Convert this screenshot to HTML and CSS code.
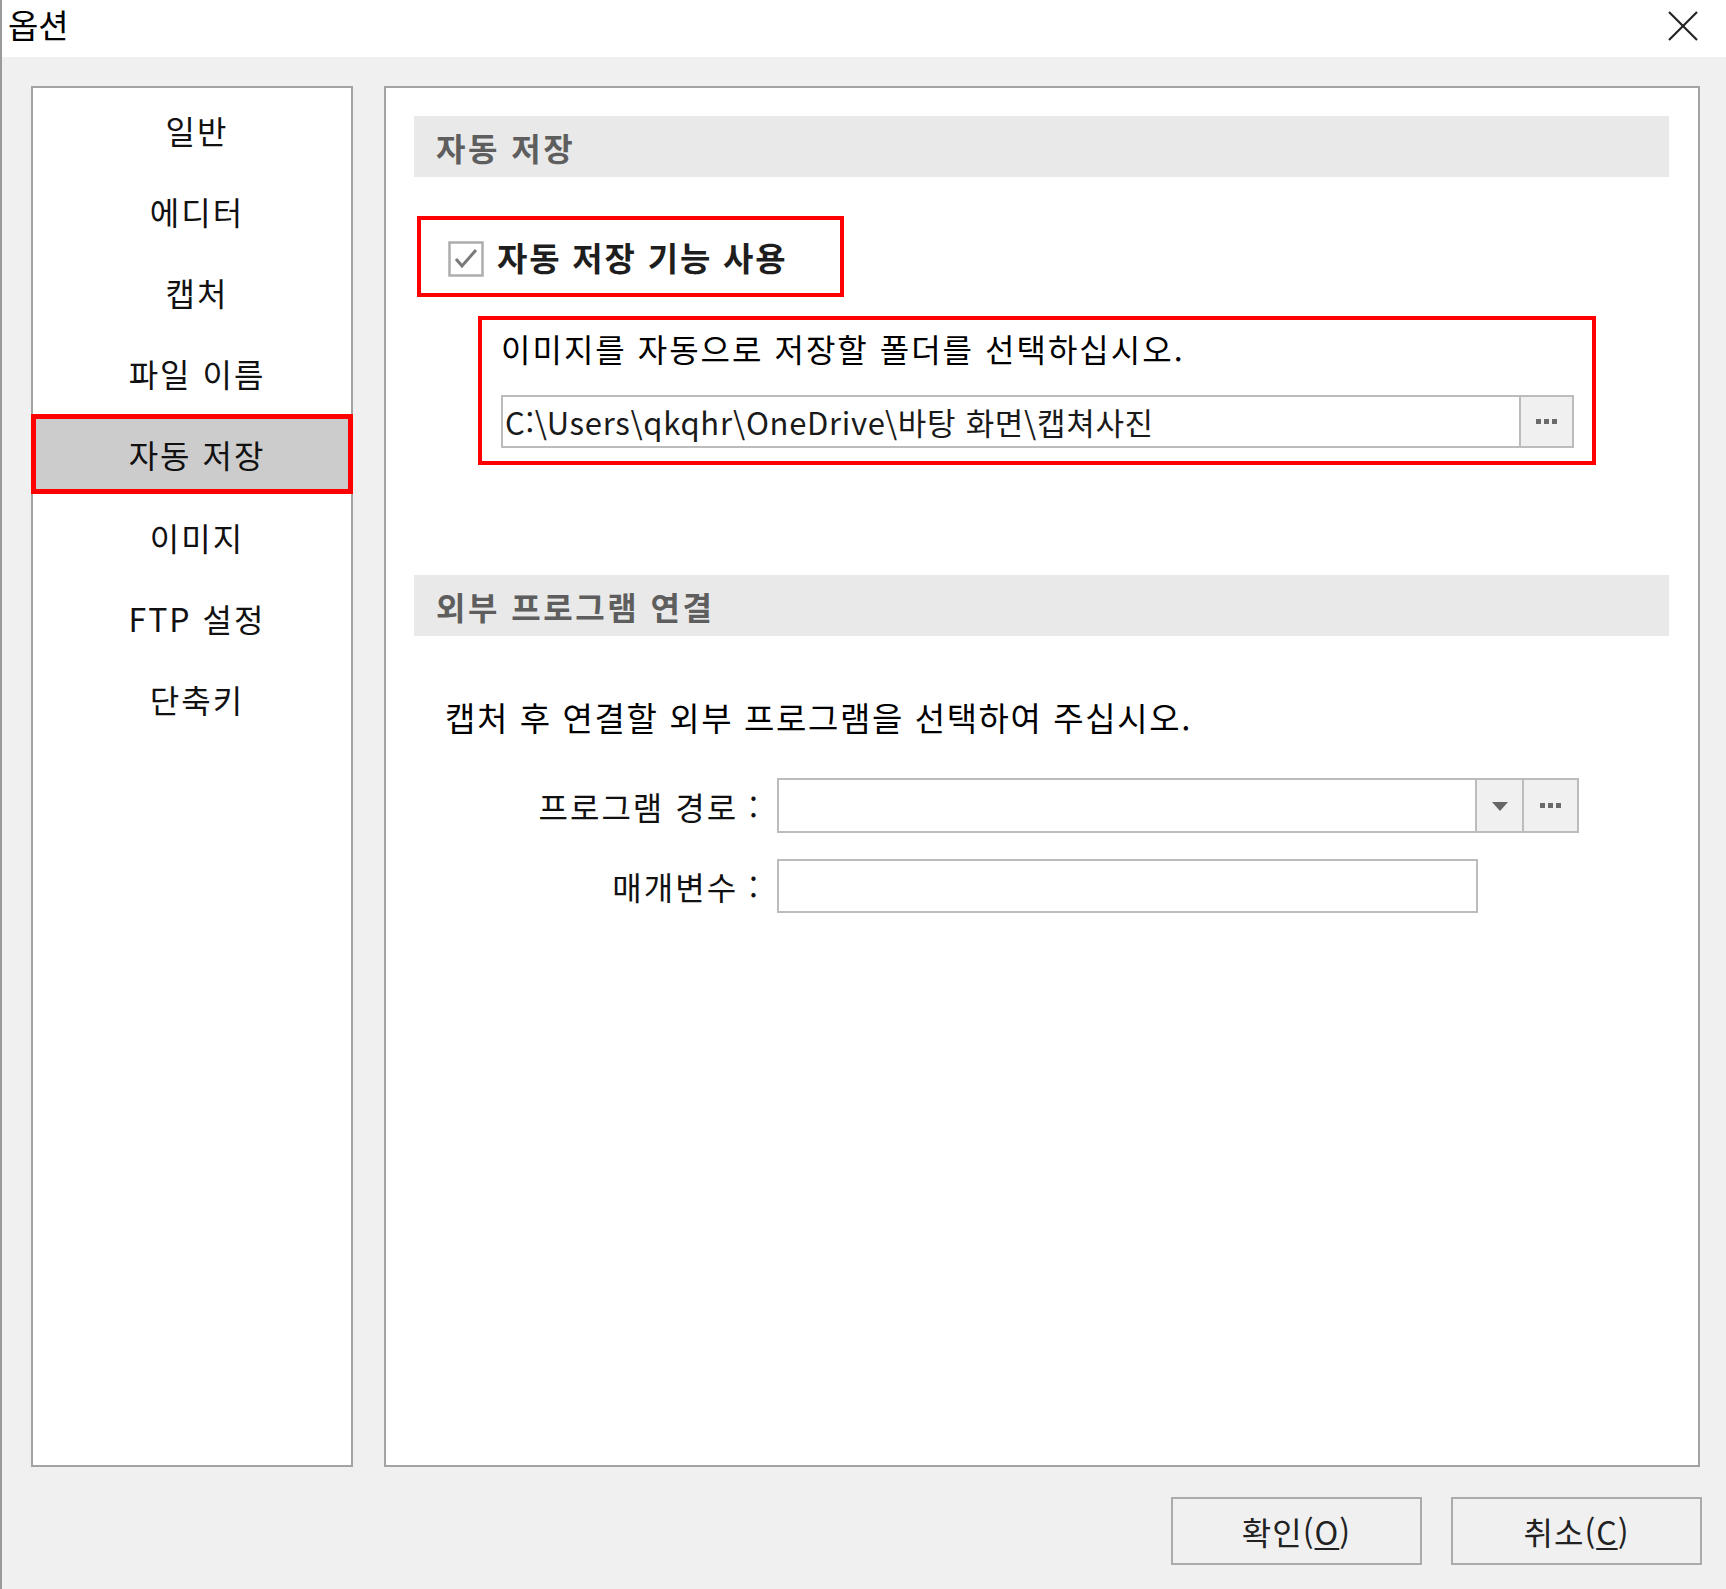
FILE: index.html
```html
<!DOCTYPE html>
<html lang="ko">
<head>
    <meta charset="UTF-8">
    <title>옵션</title>
    <link rel="stylesheet" href="styles.css">
</head>
<body>
    <div class="window">
        <div class="titlebar">
            <span class="title">옵션</span>
            <button class="close-btn" aria-label="닫기">
                <svg width="30" height="30" viewBox="0 0 30 30">
                    <line x1="1" y1="1" x2="29" y2="29" stroke="#222" stroke-width="2.2"/>
                    <line x1="29" y1="1" x2="1" y2="29" stroke="#222" stroke-width="2.2"/>
                </svg>
            </button>
        </div>

        <div class="content">
            <ul class="nav">
                <li class="nav-item">일반</li>
                <li class="nav-item">에디터</li>
                <li class="nav-item">캡처</li>
                <li class="nav-item">파일 이름</li>
                <li class="nav-item selected">자동 저장</li>
                <li class="nav-item">이미지</li>
                <li class="nav-item">FTP 설정</li>
                <li class="nav-item">단축키</li>
            </ul>

            <div class="panel">
                <div class="section-head">자동 저장</div>

                <div class="mark mark-check">
                    <label class="check">
                        <svg width="36" height="36" viewBox="0 0 36 36">
                            <rect x="1.5" y="1.5" width="33" height="33" fill="#fff" stroke="#adadad" stroke-width="2.5"/>
                            <polyline points="8,18 14,25 28,9" fill="none" stroke="#7a7a7a" stroke-width="3"/>
                        </svg>
                        <span>자동 저장 기능 사용</span>
                    </label>
                </div>

                <div class="mark mark-folder">
                    <p class="hint">이미지를 자동으로 저장할 폴더를 선택하십시오.</p>
                    <div class="field path-field">
                        <span class="field-text">C:\Users\qkqhr\OneDrive\바탕 화면\캡쳐사진</span>
                        <span class="field-btn dots"><i></i><i></i><i></i></span>
                    </div>
                </div>

                <div class="section-head ext-head">외부 프로그램 연결</div>
                <p class="desc">캡처 후 연결할 외부 프로그램을 선택하여 주십시오.</p>

                <div class="form-row">
                    <span class="label">프로그램 경로 :</span>
                    <div class="field combo">
                        <span class="field-text"></span>
                        <span class="field-btn arrow"><b></b></span>
                        <span class="field-btn dots"><i></i><i></i><i></i></span>
                    </div>
                </div>
                <div class="form-row second">
                    <span class="label">매개변수 :</span>
                    <div class="field param">
                        <span class="field-text"></span>
                    </div>
                </div>
            </div>
        </div>

        <div class="footer">
            <button class="dlg-btn">확인(<u>O</u>)</button>
            <button class="dlg-btn">취소(<u>C</u>)</button>
        </div>
    </div>
</body>
</html>
```

FILE: styles.css
```css
* {
    margin: 0;
    padding: 0;
    box-sizing: border-box;
}

body {
    font-family: "Noto Sans CJK KR", "Noto Sans", sans-serif;
    background: #f0f0f0;
    color: #111;
    letter-spacing: 2px;
}

.window {
    width: 1726px;
    height: 1589px;
    background: #f0f0f0;
    border-left: 2px solid #9a9a9a;
    display: flex;
    flex-direction: column;
    overflow: hidden;
}

.titlebar {
    height: 57px;
    background: #fff;
    display: flex;
    align-items: center;
    justify-content: space-between;
    padding: 0 28px 0 6px;
}

.title {
    font-size: 33px;
    line-height: 1;
    color: #000;
    margin-top: -8px;
    letter-spacing: 0;
}

.close-btn {
    background: none;
    border: none;
    width: 30px;
    height: 30px;
    display: flex;
    margin-top: -6px;
}

.content {
    display: flex;
    gap: 31px;
    padding: 29px 26px 0 29px;
}

/* left menu */
.nav {
    list-style: none;
    width: 322px;
    height: 1381px;
    background: #fff;
    border: 2px solid #a3a3a3;
    padding-top: 1px;
    flex-shrink: 0;
}

.nav-item {
    height: 81px;
    display: flex;
    align-items: center;
    justify-content: center;
    padding-left: 10px;
    font-size: 32px;
    color: #111;
}

.nav-item.selected {
    margin: 1px -2px 2px;
    background: #cccccc;
    border: 5px solid #ff0000;
    height: 80px;
}

/* right panel */
.panel {
    flex: 1;
    height: 1381px;
    background: #fff;
    border: 2px solid #a3a3a3;
    padding: 28px 29px 0 28px;
}

.section-head {
    height: 61px;
    background: #e9e9e9;
    display: flex;
    align-items: center;
    padding-left: 22px;
    font-size: 32px;
    font-weight: bold;
    color: #5e5e5e;
    letter-spacing: 2.5px;
}

.mark {
    border: 4px solid #ff0000;
}

.mark-check {
    margin: 39px 0 0 3px;
    width: 427px;
    height: 81px;
    display: flex;
    align-items: center;
    padding-left: 27px;
}

.check {
    display: flex;
    align-items: center;
    gap: 13px;
}

.check svg {
    flex-shrink: 0;
    margin-top: 4px;
}

.check span {
    font-size: 33px;
    font-weight: bold;
    color: #1e1e1e;
    letter-spacing: 1.8px;
}

.mark-folder {
    margin: 19px 0 0 64px;
    width: 1118px;
    height: 149px;
    padding: 6px 0 0 19px;
}

.hint {
    font-size: 32px;
    line-height: 44px;
    color: #000;
}

.field {
    display: flex;
    background: #fff;
    border: 2px solid #bcbcbc;
}

.field-text {
    flex: 1;
    display: flex;
    align-items: center;
    padding-left: 2px;
    font-size: 31px;
    color: #1a1a1a;
    white-space: nowrap;
    overflow: hidden;
    letter-spacing: 0.7px;
}

.field-btn {
    background: #f0f0f0;
    border-left: 2px solid #bcbcbc;
    display: flex;
    align-items: center;
    justify-content: center;
    gap: 3px;
}

.dots i {
    width: 5px;
    height: 5px;
    background: #6a6a6a;
}

.arrow b {
    width: 0;
    height: 0;
    border-left: 8px solid transparent;
    border-right: 8px solid transparent;
    border-top: 9px solid #666;
    margin-top: 2px;
}

.path-field {
    margin-top: 25px;
    width: 1073px;
    height: 53px;
}

.path-field .dots {
    width: 53px;
}

.ext-head {
    margin-top: 110px;
}

.desc {
    margin: 59px 0 0 31px;
    font-size: 33px;
    line-height: 44px;
    color: #000;
    letter-spacing: 1.6px;
}

.form-row {
    display: flex;
    align-items: center;
    gap: 17px;
    margin-top: 39px;
}

.form-row.second {
    margin-top: 26px;
}

.label {
    width: 346px;
    text-align: right;
    font-size: 32px;
    color: #111;
}

.combo {
    width: 802px;
    height: 55px;
}

.combo .arrow {
    width: 47px;
}

.combo .dots {
    width: 55px;
}

.param {
    width: 701px;
    height: 54px;
}

/* bottom buttons */
.footer {
    display: flex;
    justify-content: flex-end;
    gap: 29px;
    padding: 30px 24px 0 0;
}

.dlg-btn {
    width: 251px;
    height: 68px;
    background: #f0f0f0;
    border: 2px solid #ababab;
    font-family: inherit;
    font-size: 32px;
    color: #222;
    letter-spacing: 1px;
}

.dlg-btn u {
    text-underline-offset: 3px;
    text-decoration-thickness: 2px;
}
```
